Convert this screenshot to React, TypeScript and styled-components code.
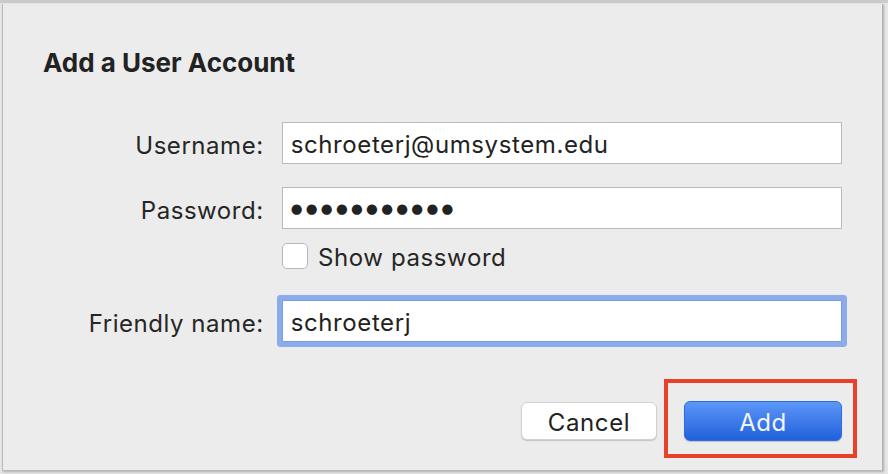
import * as React from "react";
import styled, { createGlobalStyle } from "styled-components";

const GlobalStyle = createGlobalStyle`
    html, body {
        margin: 0;
        padding: 0;
    }

    body {
        width: 888px;
        height: 474px;
        overflow: hidden;
        font-family: Inter, "Noto Sans", "Liberation Sans", sans-serif;
        -webkit-font-smoothing: antialiased;
    }
`;

const Backdrop = styled.div`
    width: 888px;
    height: 474px;
    box-sizing: border-box;
    background: #e6e6e6;
    border-top: 3px solid #cbcbcb;
    padding: 1px 0 0 2px;
    display: flex;
    align-items: flex-start;
`;

const Dialog = styled.div`
    width: 881px;
    height: 467px;
    box-sizing: border-box;
    background: #ececec;
    border-left: 1px solid #b9b9b9;
    border-right: 1px solid #b3b3b3;
    border-bottom: 1px solid #b9b9b9;
    box-shadow: 1px 1px 2px rgba(0, 0, 0, 0.25);
    padding: 43px 40px 0 40px;
    display: flex;
    flex-direction: column;
    color: #242424;
`;

const Title = styled.h1`
    margin: 0;
    font-size: 26px;
    line-height: 31px;
    font-weight: 700;
    color: #222;
`;

const Form = styled.div`
    margin-top: 44px;
    display: flex;
    flex-direction: column;
`;

const Row = styled.div<{ $gap: number }>`
    display: flex;
    align-items: center;
    gap: 18px;
    margin-top: ${ p => p.$gap }px;
`;

const Label = styled.label`
    width: 221px;
    padding-top: 4px;
    text-align: right;
    font-size: 24px;
    line-height: 29px;
    letter-spacing: 0.55px;
    color: #262626;
`;

const Field = styled.div<{ $focused?: boolean }>`
    width: 561px;
    height: 42px;
    box-sizing: border-box;
    background: #fff;
    border: 1px solid ${ p => p.$focused ? "#7a9de2" : "#bababa" };
    border-radius: ${ p => p.$focused ? "1px" : "0" };
    box-shadow: ${ p => p.$focused ? "0 0 0 5px #8cabea" : "none" };
    padding: 3px 8px 0 8px;
    display: flex;
    align-items: center;
    font-size: 24px;
    letter-spacing: 0.6px;
    color: #222;
`;

const Dots = styled.span`
    margin-top: -3px;
    font-family: "DejaVu Sans", sans-serif;
    font-size: 13.5px;
    letter-spacing: 3.3px;
    color: #222;
`;

const Spacer = styled.div`
    width: 221px;
`;

const CheckLabel = styled.label`
    height: 26px;
    display: flex;
    align-items: center;
    gap: 10px;
    font-size: 24px;
    letter-spacing: 0.6px;
    color: #262626;
`;

const CheckText = styled.span`
    padding-top: 4px;
    line-height: 22px;
`;

const Box = styled.span`
    width: 26px;
    height: 26px;
    box-sizing: border-box;
    background: #fff;
    border: 1px solid #b6b6b6;
    border-radius: 5px;
`;

const Actions = styled.div`
    margin-top: 59px;
    display: flex;
    justify-content: flex-end;
    align-items: center;
    gap: 27px;
`;

const Button = styled.button<{ $primary?: boolean }>`
    font-family: inherit;
    font-size: 24px;
    letter-spacing: 0.6px;
    height: ${ p => p.$primary ? "40px" : "38px" };
    width: ${ p => p.$primary ? "158px" : "136px" };
    border-radius: 6px;
    border: ${ p => p.$primary ? "1px solid #2d6be0" : "1px solid #d2d2d2" };
    background: ${ p => p.$primary ? "linear-gradient(#5d97f8, #2160dc)" : "#fff" };
    color: ${ p => p.$primary ? "#f3f6ff" : "#222" };
    box-shadow: 0 1px 1px rgba(0, 0, 0, 0.18);
    padding: 3px 0 0 0;
`;

const Marked = styled.div`
    position: relative;
    display: flex;
`;

const Highlight = styled.div`
    position: absolute;
    left: -20px;
    top: -22px;
    width: 193px;
    height: 79px;
    box-sizing: border-box;
    border: 4px solid #e8412b;
    pointer-events: none;
`;

export default function App() {
    return <>
        <GlobalStyle />
        <Backdrop>
            <Dialog>
                <Title>Add a User Account</Title>
                <Form>
                    <Row $gap={ 0 }>
                        <Label>Username:</Label>
                        <Field>schroeterj@umsystem.edu</Field>
                    </Row>
                    <Row $gap={ 23 }>
                        <Label>Password:</Label>
                        <Field><Dots>{ "●".repeat(11) }</Dots></Field>
                    </Row>
                    <Row $gap={ 14 }>
                        <Spacer />
                        <CheckLabel><Box /><CheckText>Show password</CheckText></CheckLabel>
                    </Row>
                    <Row $gap={ 31 }>
                        <Label>Friendly name:</Label>
                        <Field $focused>schroeterj</Field>
                    </Row>
                </Form>
                <Actions>
                    <Button>Cancel</Button>
                    <Marked>
                        <Button $primary>Add</Button>
                        <Highlight />
                    </Marked>
                </Actions>
            </Dialog>
        </Backdrop>
    </>;
}
